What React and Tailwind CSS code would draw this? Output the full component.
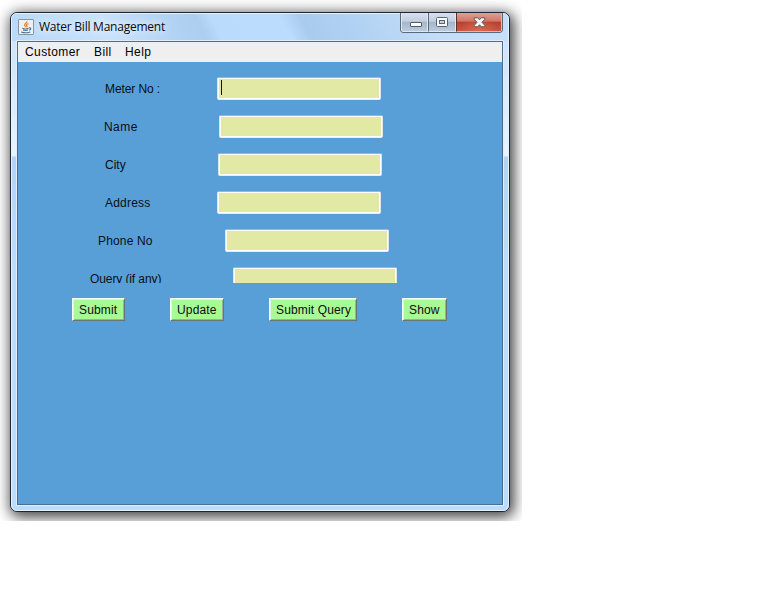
const fields = [
  { label: 'Meter No :', row: 'pl-[87px]', text: 'w-[112px] tracking-[-0.1px]', focused: true },
  { label: 'Name', row: 'pl-[86px]', text: 'w-[115px] tracking-[0.45px]' },
  { label: 'City', row: 'pl-[87px]', text: 'w-[113px]' },
  { label: 'Address', row: 'pl-[87px]', text: 'w-[112px] tracking-[0.2px]' },
  { label: 'Phone No', row: 'pl-[80px]', text: 'w-[127px] tracking-[0.15px]' },
  { label: 'Query (if any)', row: 'pl-[72px]', text: 'w-[143px] tracking-[-0.1px]' },
];

const buttons = [
  { label: 'Submit', width: 'w-[53px]' },
  { label: 'Update', width: 'w-[54px]' },
  { label: 'Submit Query', width: 'w-[88px]' },
  { label: 'Show', width: 'w-[45px]' },
];

function JavaIcon() {
  return (
    <svg className="block h-4 w-4" viewBox="0 0 16 16" fill="none">
      <rect x=".5" y=".5" width="15" height="15" rx=".5" fill="#edf0f3" stroke="#8794a4" />
      <path d="M8.9 2.2c.6 1.8-2.8 2.2-2.3 4 .2.9 1.1 1.1 1 2M10.4 4.7c-1.9.6-2.3 1.4-1.6 2.2.4.5.2 1-.3 1.4" stroke="#e98830" strokeWidth="1.3" />
      <path d="M4.3 9.3c1.6.7 4.8.6 6.3 0M5 11.1c1.4.5 3.6.5 5 0M3.2 13c2.5.9 6.8.8 9-.1M11 9c2.5-.5 2.3 1.6.1 2.2" stroke="#4f6e8e" strokeWidth="1.1" />
    </svg>
  );
}

function WindowControls() {
  return (
    <div className="flex h-[20px] w-[103px] overflow-hidden rounded-b-[4px] border border-t-0 border-[#59697c]">
      <div className="flex w-[27px] items-end justify-center border border-t-0 border-[#dce8f4] bg-[linear-gradient(#d6e1ed_0%,#c2cfdf_46%,#a4b6cc_50%,#bccbdd_100%)] pb-[4px] pl-[2px]">
        <span className="h-[5px] w-[12px] rounded-[1px] border border-[#525c68] bg-white" />
      </div>
      <div className="flex w-[28px] items-center justify-center border border-t-0 border-l-[#59697c] border-r-[#dce8f4] border-b-[#dce8f4] bg-[linear-gradient(#d6e1ed_0%,#c2cfdf_46%,#a4b6cc_50%,#bccbdd_100%)]">
        <svg width="12" height="10" viewBox="0 0 12 10">
          <rect x=".5" y=".5" width="11" height="9" rx="1" fill="#f6f8fa" stroke="#5b6571" />
          <rect x="3.5" y="3.5" width="5" height="3" fill="#c4d1df" stroke="#5b6571" />
        </svg>
      </div>
      <div className="flex flex-1 items-center justify-center border border-t-0 border-l-[#612c2c] border-r-[#edb1a5] border-b-[#edb1a5] bg-[radial-gradient(ellipse_at_50%_100%,rgba(226,113,83,.75),transparent_60%),linear-gradient(#dfa196_0%,#cf7466_46%,#b6402f_50%,#c85643_100%)]">
        <svg width="13" height="11" viewBox="0 0 13 11">
          <path d="M1.2.8h3.5l1.8 2L8.3.8h3.5v1.5L9 5.3l2.8 3v1.5H8.3l-1.8-2-1.8 2H1.2V8.3l2.8-3-2.8-3z" fill="#f8f8f8" stroke="#65505a" />
        </svg>
      </div>
    </div>
  );
}

export default function App() {
  return (
    <div className="h-[614px] w-[768px] overflow-hidden bg-white font-['Liberation_Sans',Arial,sans-serif] text-[12px] text-[#0b0e12]">
      <div className="h-[521px] w-[522px] overflow-hidden pt-[12px] pl-[10px]">
        <div className="h-[500px] w-[500px] rounded-[7px] border border-[#1c2736] bg-[#b9dafa] shadow-[2px_3px_14px_2px_rgba(0,0,0,0.75)]">
          <div className="flex h-[498px] flex-col rounded-[6px] border border-[#e6f3ff] bg-[linear-gradient(#c8e0f9_0px,#e9f4ff_142px,#b2d3f3_143px,#bcdcfc_250px,#bcdcfc_100%)]">
            <div className="flex h-[27px] shrink-0 items-start rounded-t-[5px] bg-[linear-gradient(62deg,#b9d9f8_0%,#c8e2fb_20%,#b3d3f4_32%,#acceef_38.5%,#badbfc_41.5%,#bbdcfd_55%,#a9cbed_59%,#b0d1f2_68%,#c3def9_85%,#c6e0fa_100%)] pl-[6px]">
              <div className="pt-[5px]"><JavaIcon /></div>
              <div className="ml-[5px] pt-[4px] font-['Open_Sans','Noto_Sans',sans-serif] text-[12px] leading-[18px] tracking-[-0.24px] whitespace-nowrap text-[#080a0e] [text-shadow:0_0_8px_#fff,0_0_12px_rgba(255,255,255,.7)]">
                Water Bill Management
              </div>
              <div className="-mt-px mr-[5px] ml-auto"><WindowControls /></div>
            </div>
            <div className="mx-[5px] h-[464px] shrink-0 overflow-hidden border border-[#4d6e8d] bg-[#589fd8] shadow-[0_0_0_1px_#dceeff]">
              <div className="flex h-[20px] bg-[#efefef] pl-[7px] leading-[20px] tracking-[0.4px] text-black">
                <span className="w-[69px]">Customer</span>
                <span className="w-[31px]">Bill</span>
                <span>Help</span>
              </div>
              <div className="flex h-[221px] flex-col gap-[15px] overflow-hidden pt-[15px]">
                {fields.map((field) => (
                  <div key={field.label} className={`flex h-[23px] shrink-0 ${field.row}`}>
                    <label className={`shrink-0 leading-[25px] whitespace-nowrap ${field.text}`}>{field.label}</label>
                    <div className="h-[23px] w-[164px] rounded-[2px] border border-t-[#b3b0ad] border-r-[#dce7ec] border-b-[#e8eef2] border-l-[#dce7ec]">
                      <div className="h-[21px] border border-white bg-[#e1e9a4] pt-px pl-[2px]">
                        {field.focused && <div className="h-[15px] w-px bg-[#111]" />}
                      </div>
                    </div>
                  </div>
                ))}
              </div>
              <div className="flex gap-[45px] pt-[15px] pl-[54px]">
                {buttons.map((button) => (
                  <button
                    key={button.label}
                    className={`h-[23px] border border-t-[#f8fbfb] border-r-[#66777a] border-b-[#66777a] border-l-[#f8fbfb] bg-[#a8fa94] pl-[6px] text-left leading-[22px] tracking-[0.15px] whitespace-nowrap shadow-[inset_1px_1px_0_#dff3e2,inset_-1px_-1px_0_#9fae9c] ${button.width}`}
                  >
                    {button.label}
                  </button>
                ))}
              </div>
            </div>
          </div>
        </div>
      </div>
    </div>
  );
}
